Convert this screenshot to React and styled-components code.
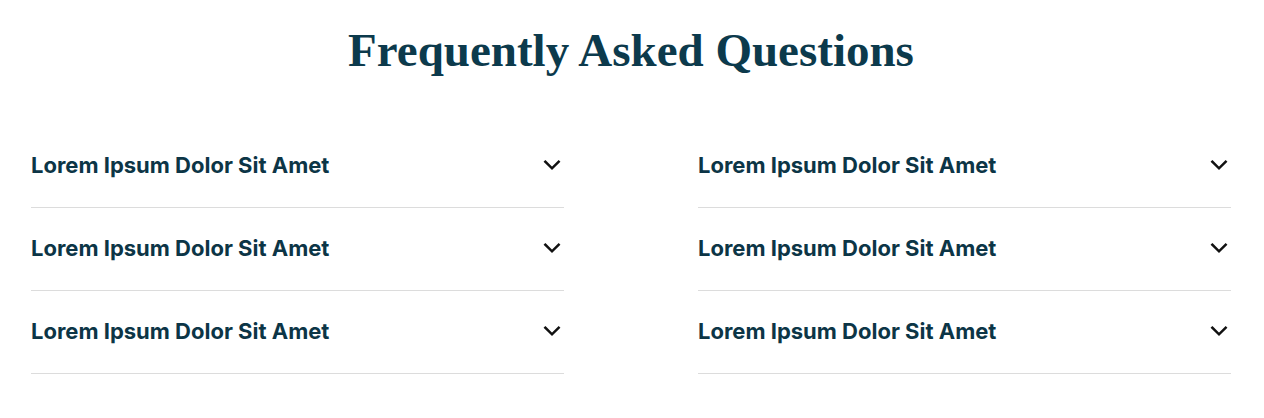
import styled, { createGlobalStyle } from "styled-components";

const GlobalStyle = createGlobalStyle`
  * { box-sizing: border-box; }
  body {
    margin: 0;
    background: #ffffff;
    font-family: "Inter", "Liberation Sans", sans-serif;
  }
`;

const Section = styled.section`
  width: 1200px;
  margin: 0 auto;
  padding-top: 24px;
  transform: translateX(-1px);
`;

const Title = styled.h2`
  margin: 0;
  text-align: center;
  font-family: "Liberation Serif", "DejaVu Serif", serif;
  font-weight: 700;
  font-size: 47px;
  line-height: 52px;
  color: #0c3a4c;
`;

const Columns = styled.div`
  display: grid;
  grid-template-columns: 533px 533px;
  column-gap: 134px;
  margin-top: 49px;
`;

const List = styled.div`
  display: flex;
  flex-direction: column;
`;

const Item = styled.button`
  display: flex;
  align-items: center;
  justify-content: space-between;
  height: 83px;
  padding: 0 2px 2px 0;
  border: 0;
  border-bottom: 1px solid #dcdcdc;
  background: none;
  cursor: pointer;
  text-align: left;
`;

const Question = styled.span`
  font-family: "Inter", "Liberation Sans", sans-serif;
  font-weight: 700;
  font-size: 22px;
  color: #0c3546;
`;

const Chevron = () => (
  <svg width="20" height="20" viewBox="0 0 24 24" fill="none" stroke="#111" strokeWidth="3" strokeLinecap="square">
    <path d="M4 8l8 8 8-8" />
  </svg>
);

const questions = [
  "Lorem Ipsum Dolor Sit Amet",
  "Lorem Ipsum Dolor Sit Amet",
  "Lorem Ipsum Dolor Sit Amet",
];

export default function App() {
  return (
    <>
      <GlobalStyle />
      <Section>
        <Title>Frequently Asked Questions</Title>
        <Columns>
          {[0, 1].map((col) => (
            <List key={col}>
              {questions.map((q, i) => (
                <Item key={i}>
                  <Question>{q}</Question>
                  <Chevron />
                </Item>
              ))}
            </List>
          ))}
        </Columns>
      </Section>
    </>
  );
}
